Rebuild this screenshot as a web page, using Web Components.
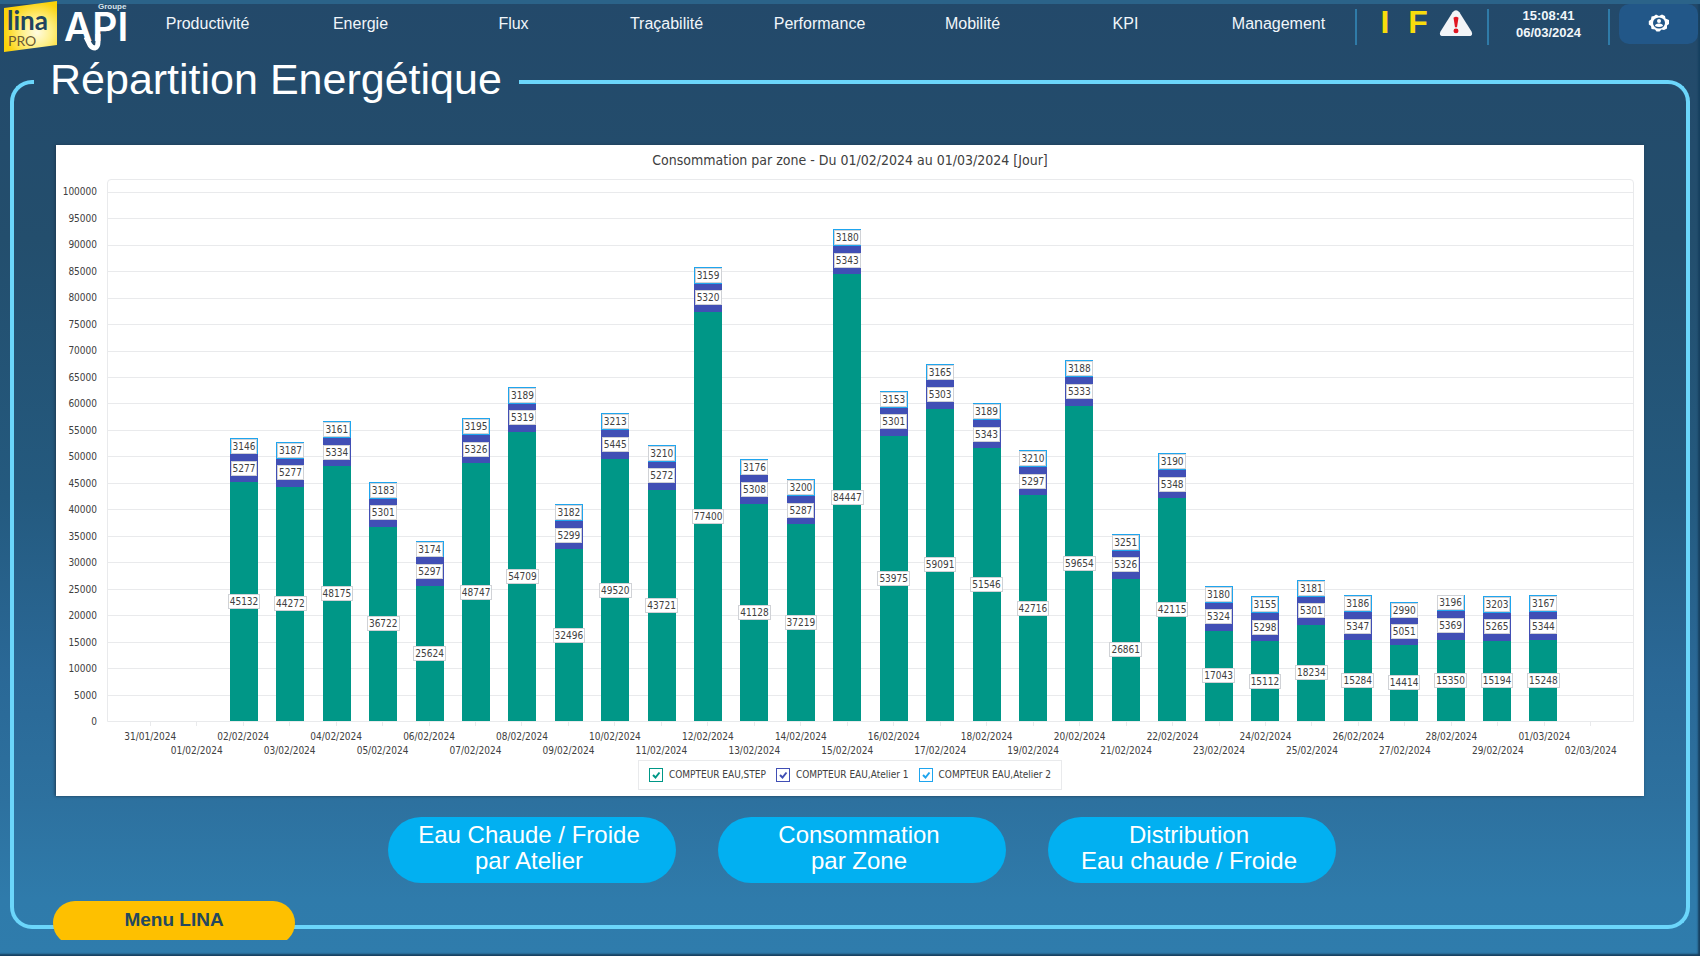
<!DOCTYPE html>
<html lang="fr">
<head>
<meta charset="utf-8">
<title>LINA PRO – Répartition Energétique</title>
<style>
  html, body { margin: 0; }
  body { font-family: "Liberation Sans", Arial, sans-serif; color: #fff; background: #234b6a; }
</style>
</head>
<body>
<lina-app></lina-app>

<script>
const define = (name, html, setup) => {
  const template = document.createElement('template');
  template.innerHTML = html;
  customElements.define(name, class extends HTMLElement {
    connectedCallback() {
      if (this.shadowRoot) return;
      const root = this.attachShadow({ mode: 'open' });
      root.append(template.content.cloneNode(true));
      if (setup) setup.call(this, root);
    }
  });
};

define('lina-logo', `
<style>
  :host { display: block; }
  svg { display: block; overflow: visible; }
</style>
<svg width="132" height="54" viewBox="0 0 132 54" role="img" aria-label="LINA PRO – Groupe API">
  <defs>
    <radialGradient id="gold" cx="0.62" cy="0.62" r="0.62">
      <stop offset="0" stop-color="#fffbe0"/>
      <stop offset="0.45" stop-color="#fff089"/>
      <stop offset="1" stop-color="#fbd20a"/>
    </radialGradient>
  </defs>
  <path d="M4 8 L57 1 V45 L4 52 Z" fill="url(#gold)"/>
  <text x="7" y="30" font-family="Lato, sans-serif" font-weight="700" font-size="26" fill="#21445f">lina</text>
  <text x="8" y="46" font-family="Lato, sans-serif" font-size="14" fill="#6b5a33">PRO</text>
  <text x="98" y="9" font-family="Liberation Sans, sans-serif" font-weight="700" font-size="8" fill="#d7e3ee">Groupe</text>
  <text x="64" y="41" font-family="Inter, sans-serif" font-weight="600" font-size="39" fill="#fff">API</text>
  <path d="M86 37 L90 45 Q92 48 95 48 Q98 47 98 42 V34" fill="none" stroke="#fff" stroke-width="5"/>
</svg>`);

define('nav-item', `
<style>
  :host { display: block; text-align: center; }
  a { color: #f1f6fa; text-decoration: none; font-size: 16px; line-height: 20px; }
</style>
<a href="#"><slot></slot></a>`);

define('status-group', `
<style>
  :host { display: flex; align-items: flex-start; justify-content: center; height: 36px; box-sizing: border-box; border-left: 2px solid #2f7ba8; }
</style>
<slot></slot>`);

define('alert-icons', `
<style>
  :host { display: flex; align-items: flex-start; gap: 9px; font-size: 32px; line-height: 26px; font-weight: 700; color: #f8dc0c; }
  span { width: 24px; text-align: center; }
  svg { display: block; }
</style>
<span>I</span><span>F</span>
<svg width="34" height="28" viewBox="0 0 34 30" preserveAspectRatio="none" role="img" aria-label="Alerte">
  <path d="M13.600 3.500 Q17 -1 20.400 3.500 L32.500 24 Q34.500 28.500 30 29 H4 Q-0.500 28.500 1.500 24 Z" fill="#f2f4f7"/>
  <path d="M14.500 9.500 Q17 7 19.500 9.500 L18 19.500 H16 Z" fill="#e01522"/>
  <circle cx="17" cy="23.500" r="2.500" fill="#e01522"/>
</svg>`);

define('lina-clock', `
<style>
  :host { display: block; text-align: center; font-weight: 700; font-size: 13px; line-height: 17px; color: #f1f6fa; }
  time { display: block; }
</style>
<time>15:08:41</time><time datetime="2024-03-06">06/03/2024</time>`);

define('settings-button', `
<style>
  :host { display: block; flex: 1; margin: 0 2px 0 9px; }
  button { display: flex; align-items: center; justify-content: center; width: 100%; height: 40px; padding: 0 0 2px; border: 0; border-radius: 10px; background: #225788; }
</style>
<button aria-label="Paramètres">
  <svg width="22" height="18" viewBox="0 0 22 18" aria-hidden="true">
    <path d="M8 0.500 L11 2 L14 0.500 L17 2 L17.500 4.500 L21 6 V10 L19 11.500 L19 14.500 L16 16 L13.500 15.500 L11.500 17.500 L8.500 17.500 L7 15.500 L3.500 15 L3 12 L0.800 10.500 V7 L3 5.500 L3.500 2.500 L6 2 Z" fill="#fff"/>
    <ellipse cx="11" cy="9" rx="6" ry="5.500" fill="#225788"/>
    <circle cx="11" cy="7" r="2" fill="#fff"/>
    <path d="M7 12 Q7 9.500 11 9.500 Q15 9.500 15 12 Q11 14 7 12 Z" fill="#fff"/>
  </svg>
</button>`);

define('lina-header', `
<style>
  :host { display: flex; align-items: flex-start; height: 50px; border-top: 4px solid #2b6389; box-sizing: border-box; }
  lina-logo { width: 131px; margin-top: -4px; flex: none; }
  nav { flex: 1; display: grid; grid-template-columns: repeat(8, 1fr); padding-top: 10px; }
  status-group { margin-top: 5px; flex: none; }
  .alerts { width: 132px; justify-content: flex-start; padding-left: 16px; }
  .clock { width: 121px; }
  .tools { width: 92px; }
  lina-clock { margin-top: -2px; }
  settings-button { margin-top: -5px; }
</style>
<lina-logo></lina-logo>
<nav aria-label="Menu principal">
  <nav-item>Productivité</nav-item>
  <nav-item>Energie</nav-item>
  <nav-item>Flux</nav-item>
  <nav-item>Traçabilité</nav-item>
  <nav-item>Performance</nav-item>
  <nav-item>Mobilité</nav-item>
  <nav-item>KPI</nav-item>
  <nav-item>Management</nav-item>
</nav>
<status-group class="alerts"><alert-icons></alert-icons></status-group>
<status-group class="clock"><lina-clock></lina-clock></status-group>
<status-group class="tools"><settings-button></settings-button></status-group>`);

define('lina-panel', `
<style>
  :host { display: flex; flex-direction: column; --line: 4px solid #6bd6fb; }
  .top { display: flex; align-items: flex-end; height: 50px; }
  .corner, .rule { box-sizing: border-box; height: 25px; border-top: var(--line); }
  .corner { width: 24px; border-left: var(--line); border-top-left-radius: 22px; }
  .rule { flex: 1; border-right: var(--line); border-top-right-radius: 22px; }
  h1 { align-self: flex-start; margin: 0 17px 0 16px; font-size: 43px; line-height: 48px; font-weight: 400; white-space: nowrap; }
  .body { position: relative; flex: 1; display: flex; flex-direction: column; border: var(--line); border-top: 0; border-radius: 0 0 22px 22px; padding: 40px 42px 42px; }
  .foot { position: absolute; left: 39px; bottom: -15px; }
</style>
<div class="top"><div class="corner"></div><h1><slot name="title"></slot></h1><div class="rule"></div></div>
<div class="body"><slot></slot><div class="foot"><slot name="foot"></slot></div></div>`);

define('menu-button', `
<style>
  :host { display: block; height: 39px; overflow: hidden; }
  button { display: block; width: 242px; height: 44px; padding: 0 0 6px; border: 0; border-radius: 22px; background: #fec000; color: #24485f; font: 700 19px/20px "Liberation Sans", Arial, sans-serif; }
</style>
<button><slot></slot></button>`);

define('pill-button', `
<style>
  :host { display: block; }
  button { display: block; width: 288px; height: 66px; padding: 0 6px 4px 0; border: 0; border-radius: 33px; background: #02b0f1; color: #fff; font: 24px/26px "Liberation Sans", Arial, sans-serif; }
</style>
<button><slot></slot></button>`);

define('value-label', `
<style>
  :host { display: block; flex: none; box-sizing: border-box; height: 15px; border: 1px solid #d0d2d6; padding: 0 1px; background: #fff; color: #404040; font-size: 10px; line-height: 13px; }
</style>
<slot></slot>`);

define('stack-bar', `
<style>
  :host { display: flex; flex-direction: column; width: 28px; }
  div { display: flex; align-items: center; justify-content: center; min-height: 0; }
  .a2 { background: #1fa5ee; }
  .a1 { background: #414fb5; }
  .step { background: #009787; }
</style>
<div class="a2"></div><div class="a1"></div><div class="step"></div>`,
function (root) {
  const values = this.getAttribute('values').split(' ').reverse();
  root.querySelectorAll('div').forEach((segment, i) => {
    segment.style.flex = values[i] + ' 1 0';
    const label = document.createElement('value-label');
    label.textContent = values[i];
    segment.append(label);
  });
});

define('legend-item', `
<style>
  :host { display: block; }
  label { display: flex; align-items: center; gap: 6px; color: #404040; font-size: 10px; line-height: 14px; white-space: nowrap; }
  .box { display: grid; }
  input { grid-area: 1 / 1; appearance: none; box-sizing: border-box; margin: 0; width: 14px; height: 14px; border: 1px solid var(--series); background: #fff; }
  svg { grid-area: 1 / 1; pointer-events: none; visibility: hidden; }
  input:checked + svg { visibility: visible; }
</style>
<label><span class="box"><input type="checkbox" checked><svg width="14" height="14" viewBox="0 0 14 14" aria-hidden="true"><path d="M4 7 L6.500 9.500 L10.500 4.500" fill="none" stroke="var(--series)" stroke-width="2"/></svg></span><slot></slot></label>`);

const DAYS = [
  ['31/01/2024'], ['01/02/2024'],
  ['02/02/2024', 45132, 5277, 3146], ['03/02/2024', 44272, 5277, 3187],
  ['04/02/2024', 48175, 5334, 3161], ['05/02/2024', 36722, 5301, 3183],
  ['06/02/2024', 25624, 5297, 3174], ['07/02/2024', 48747, 5326, 3195],
  ['08/02/2024', 54709, 5319, 3189], ['09/02/2024', 32496, 5299, 3182],
  ['10/02/2024', 49520, 5445, 3213], ['11/02/2024', 43721, 5272, 3210],
  ['12/02/2024', 77400, 5320, 3159], ['13/02/2024', 41128, 5308, 3176],
  ['14/02/2024', 37219, 5287, 3200], ['15/02/2024', 84447, 5343, 3180],
  ['16/02/2024', 53975, 5301, 3153], ['17/02/2024', 59091, 5303, 3165],
  ['18/02/2024', 51546, 5343, 3189], ['19/02/2024', 42716, 5297, 3210],
  ['20/02/2024', 59654, 5333, 3188], ['21/02/2024', 26861, 5326, 3251],
  ['22/02/2024', 42115, 5348, 3190], ['23/02/2024', 17043, 5324, 3180],
  ['24/02/2024', 15112, 5298, 3155], ['25/02/2024', 18234, 5301, 3181],
  ['26/02/2024', 15284, 5347, 3186], ['27/02/2024', 14414, 5051, 2990],
  ['28/02/2024', 15350, 5369, 3196], ['29/02/2024', 15194, 5265, 3203],
  ['01/03/2024', 15248, 5344, 3167], ['02/03/2024']
];
const AXIS_MAX = 102300, AXIS_STEP = 5000, AXIS_TOP = 100000;

define('zone-chart', `
<style>
  :host { display: flex; flex-direction: column; background: #fff; color: #404040; font-family: "DejaVu Sans Condensed", "DejaVu Sans", sans-serif; box-shadow: -1px 0 3px #1e3a52; }
  h2 { margin: 0; padding: 5px 0 9px; font-size: 14px; line-height: 20px; font-weight: 400; text-align: center; }
  .area { flex: 1; display: grid; grid-template-columns: 51px minmax(0, 1fr); grid-template-rows: minmax(0, 1fr) 38px; padding-right: 10px; }
  .scale { display: flex; flex-direction: column; justify-content: space-between; margin: 6px 10px -7px 0; text-align: right; font-size: 10px; line-height: 14px; }
  .plot { display: grid; grid-template: minmax(0, 1fr) / minmax(0, 1fr); border: 1px solid #e9eaec; border-radius: 4px 4px 0 0; }
  .grid, .bars { grid-area: 1 / 1; display: flex; min-height: 0; }
  .grid { flex-direction: column; }
  .grid div { box-sizing: border-box; }
  .grid div + div { border-top: 1px solid #e9eaec; }
  .bars, .dates { padding: 0 20px; }
  .day { flex: 1; display: flex; justify-content: center; align-items: flex-end; min-width: 0; }
  .dates { grid-column: 2; display: flex; font-size: 10px; line-height: 14px; }
  .dates div { flex: 1; min-width: 0; display: flex; justify-content: center; white-space: nowrap; padding-top: 8px; background: linear-gradient(#e9eaec, #e9eaec) center top / 1px 4px no-repeat; }
  .dates div:nth-child(even) { padding-top: 22px; }
  .legend { align-self: center; display: flex; gap: 10px; margin-bottom: 6px; padding: 7px 10px; border: 1px solid #e9eaec; }
</style>
<h2>Consommation par zone - Du 01/02/2024 au 01/03/2024 [Jour]</h2>
<div class="area">
  <div class="scale"></div>
  <div class="plot"><div class="grid"></div><div class="bars"></div></div>
  <div class="dates"></div>
</div>
<div class="legend">
  <legend-item style="--series:#009787">COMPTEUR EAU,STEP</legend-item>
  <legend-item style="--series:#414fb5">COMPTEUR EAU,Atelier 1</legend-item>
  <legend-item style="--series:#1fa5ee">COMPTEUR EAU,Atelier 2</legend-item>
</div>`,
function (root) {
  const add = (parent, tag = 'div') => parent.appendChild(document.createElement(tag));
  const [scale, grid, bars, dates] = ['.scale', '.grid', '.bars', '.dates'].map(s => root.querySelector(s));
  for (let v = AXIS_TOP; v >= 0; v -= AXIS_STEP) add(scale).textContent = v;
  add(grid).style.flex = `${AXIS_MAX - AXIS_TOP} 1 0`;
  for (let v = AXIS_TOP; v > 0; v -= AXIS_STEP) add(grid).style.flex = `${AXIS_STEP} 1 0`;
  for (const [date, ...values] of DAYS) {
    const day = add(bars);
    day.className = 'day';
    if (values.length) {
      const bar = document.createElement('stack-bar');
      bar.setAttribute('values', values.join(' '));
      bar.style.height = `${values.reduce((a, b) => a + b) / AXIS_MAX * 100}%`;
      day.append(bar);
    }
    add(add(dates), 'span').textContent = date;
  }
});

define('lina-app', `
<style>
  :host { display: flex; flex-direction: column; min-height: 100vh; box-sizing: border-box; padding-bottom: 27px;
    background: linear-gradient(#23496a, #234e6d 25%, #245a7f 52%, #2a6896 70%, #2d719f 84%, #2f7bab 94%, #2f7cac);
    box-shadow: inset -2px -2px 2px #17405f; }
  lina-panel { flex: 1; margin: 5px 10px 0; }
  zone-chart { flex: 1; }
  .actions { display: flex; justify-content: center; gap: 42px; margin-top: 21px; padding-left: 24px; }
</style>
<lina-header></lina-header>
<lina-panel>
  <span slot="title">Répartition Energétique</span>
  <zone-chart></zone-chart>
  <div class="actions">
    <pill-button>Eau Chaude / Froide<br>par Atelier</pill-button>
    <pill-button>Consommation<br>par Zone</pill-button>
    <pill-button>Distribution<br>Eau chaude / Froide</pill-button>
  </div>
  <menu-button slot="foot">Menu LINA</menu-button>
</lina-panel>`);
</script>
</body>
</html>
